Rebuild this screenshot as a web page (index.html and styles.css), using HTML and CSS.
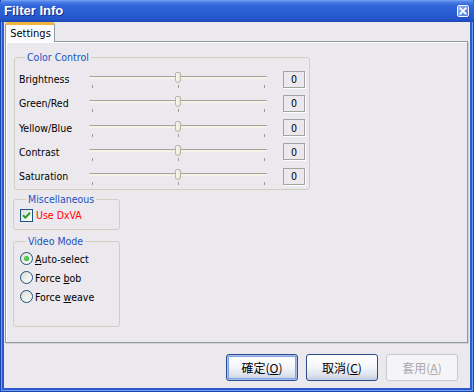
FILE: index.html
```html
<!DOCTYPE html>
<html>
<head>
<meta charset="utf-8">
<link rel="stylesheet" href="styles.css">
</head>
<body>
<div class="window">
  <div class="titlebar">
    <span class="title">Filter Info</span>
    <span class="close"><svg width="9" height="9" viewBox="0 0 9 9"><path d="M1.5 1.5 L7.5 7.5 M7.5 1.5 L1.5 7.5" stroke="#fff" stroke-width="2" stroke-linecap="square"/></svg></span>
  </div>
  <div class="client">
    <div class="tabs"><div class="tab">Settings</div></div>
    <div class="panel">
      <fieldset class="group color">
        <legend>Color Control</legend>
        <div class="row"><span class="lbl">Brightness</span><div class="slider"><div class="track"></div><div class="thumb"></div><i class="tick t1"></i><i class="tick t2"></i><i class="tick t3"></i></div><span class="val">0</span></div>
        <div class="row"><span class="lbl">Green/Red</span><div class="slider"><div class="track"></div><div class="thumb"></div><i class="tick t1"></i><i class="tick t2"></i><i class="tick t3"></i></div><span class="val">0</span></div>
        <div class="row"><span class="lbl">Yellow/Blue</span><div class="slider"><div class="track"></div><div class="thumb"></div><i class="tick t1"></i><i class="tick t2"></i><i class="tick t3"></i></div><span class="val">0</span></div>
        <div class="row"><span class="lbl">Contrast</span><div class="slider"><div class="track"></div><div class="thumb"></div><i class="tick t1"></i><i class="tick t2"></i><i class="tick t3"></i></div><span class="val">0</span></div>
        <div class="row"><span class="lbl">Saturation</span><div class="slider"><div class="track"></div><div class="thumb"></div><i class="tick t1"></i><i class="tick t2"></i><i class="tick t3"></i></div><span class="val">0</span></div>
      </fieldset>
      <fieldset class="group misc">
        <legend>Miscellaneous</legend>
        <div class="opt"><span class="check"><svg width="9" height="9" viewBox="0 0 9 9"><path d="M1 4.2 L3.4 6.6 L8 1.8" fill="none" stroke="#21a121" stroke-width="2"/></svg></span><span class="red">Use DxVA</span></div>
      </fieldset>
      <fieldset class="group mode">
        <legend>Video Mode</legend>
        <div class="opt radio-row"><span class="radio on"></span><span><u>A</u>uto-select</span></div>
        <div class="opt radio-row"><span class="radio"></span><span>Force <u>b</u>ob</span></div>
        <div class="opt radio-row"><span class="radio"></span><span>Force <u>w</u>eave</span></div>
      </fieldset>
    </div>
    <div class="buttons">
      <button class="btn default">確定(<u>O</u>)</button>
      <button class="btn">取消(<u>C</u>)</button>
      <button class="btn disabled">套用(<u>A</u>)</button>
    </div>
  </div>
</div>
</body>
</html>
```
FILE: styles.css
```css
html, body {
  margin: 0;
  padding: 0;
  background: #ffffff;
}
.window {
  width: 474px;
  height: 392px;
  box-sizing: border-box;
  display: flex;
  flex-direction: column;
  background: #2a5bd0;
  box-shadow: inset 1px 0 0 #1b46b0, inset -1px 0 0 #1b46b0, inset 0 -1px 0 #1b46b0, inset 2px 0 0 #6f9cf0, inset -2px 0 0 #6f9cf0, inset 0 -2px 0 #6f9cf0;
  padding: 0 4px 4px 4px;
  font-family: "DejaVu Sans Condensed", "DejaVu Sans", "Noto Sans CJK TC", sans-serif;
  font-stretch: condensed;
  font-size: 10.5px;
  color: #000;
}
.titlebar {
  height: 22px;
  margin: 0 -4px;
  padding: 0 5px 0 4px;
  display: flex;
  align-items: center;
  justify-content: space-between;
  background: linear-gradient(#7aa6f4 0, #4a7ee6 2px, #2f63d8 6px, #2a5cd2 14px, #2454c8 19px, #1d47b6 22px);
  border-radius: 4px 4px 0 0;
}
.title {
  color: #fff;
  font-family: "Liberation Sans", Arial, sans-serif;
  font-stretch: normal;
  font-weight: bold;
  font-size: 13px;
  text-shadow: 1px 1px 0 #0d2f8e;
  margin-top: -1px;
}
.close {
  width: 12px;
  height: 12px;
  box-sizing: border-box;
  border: 1px solid #f0f4ff;
  border-radius: 2px;
  background: linear-gradient(135deg, #8bb2f6, #4a7ae2);
  display: flex;
  align-items: center;
  justify-content: center;
  margin-top: -1px;
}
.close svg { width: 8px; height: 8px; }
.client {
  flex: 1;
  display: flex;
  flex-direction: column;
  background: #ebe9ed;
  padding: 0 2px 0 1px;
}
.tabs {
  display: flex;
  height: 19px;
  position: relative;
  z-index: 1;
}
.tab {
  width: 50px;
  height: 20px;
  box-sizing: border-box;
  border: 1px solid #919b9c;
  border-bottom: none;
  border-top: 3px solid #f3b63c;
  border-radius: 3px 3px 0 0;
  background: #fcfcfe;
  display: flex;
  align-items: center;
  justify-content: center;
  padding-bottom: 1px;
  padding-left: 1px;
  font-size: 11px;
}
.panel {
  flex: 1;
  border: 1px solid #919b9c;
  box-shadow: inset 1px 1px 0 #fff, 1px 1px 0 #d3d2d8;
  background: #ebe9ed;
  padding: 9px 8px 0 8px;
  display: flex;
  flex-direction: column;
  align-items: flex-start;
}
.group {
  margin: 0;
  border: 1px solid #d0d0bf;
  border-radius: 3px;
  padding: 0;
  min-width: 0;
}
.group legend {
  color: #2153c0;
  line-height: 12px;
  padding: 0 2px;
  margin-left: 6px;
}
.color {
  width: 296px;
  box-sizing: border-box;
  margin-left: 0;
  padding: 4px 3px 1px 4px;
}
.row {
  height: 24.25px;
  display: flex;
  align-items: center;
}
.lbl {
  width: 70px;
}
.slider {
  position: relative;
  width: 178px;
  height: 18px;
  margin-right: 16px;
}
.track {
  position: absolute;
  left: 0;
  right: 0;
  top: 6px;
  height: 3px;
  box-sizing: border-box;
  border-top: 1px solid #a3a39c;
  background: #f3f3e8;
  border-radius: 2px 0 0 2px;
}
.thumb {
  position: absolute;
  left: 86px;
  top: 2px;
  width: 6px;
  height: 11px;
  box-sizing: border-box;
  border: 1px solid #b5b5a8;
  border-radius: 2px 2px 3px 3px;
  background: linear-gradient(90deg, #f8f8f0, #e6e6d6);
}
.tick {
  position: absolute;
  top: 15px;
  width: 1px;
  height: 3px;
  background: #9c9c94;
}
.t1 { left: 3px; }
.t2 { left: 89px; }
.t3 { left: 175px; }
.val {
  width: 22px;
  height: 17px;
  box-sizing: border-box;
  border: 1px solid #a3a3a0;
  box-shadow: 1px 1px 0 #fff;
  display: flex;
  align-items: center;
  justify-content: center;
}
.misc {
  width: 107px;
  box-sizing: border-box;
  margin-top: 3px;
  margin-left: -1px;
  padding: 3px 4px 7px 6px;
}
.mode {
  width: 107px;
  box-sizing: border-box;
  margin-top: 5px;
  margin-left: -1px;
  padding: 2px 4px 20px 6px;
}
.opt {
  display: flex;
  align-items: center;
  height: 14px;
  gap: 3px;
}
.radio-row {
  height: 19px;
  gap: 2px;
}
.check {
  width: 13px;
  height: 13px;
  box-sizing: border-box;
  border: 1px solid #1c5180;
  background: linear-gradient(135deg, #dcdcd7, #fff);
  display: flex;
  align-items: center;
  justify-content: center;
}
.red { color: #f00; }
.radio {
  width: 13px;
  height: 13px;
  box-sizing: border-box;
  border: 1px solid #1c5180;
  border-radius: 50%;
  background: linear-gradient(135deg, #dcdcd5, #fff);
  display: flex;
  align-items: center;
  justify-content: center;
}
.radio.on::after {
  content: "";
  width: 5px;
  height: 5px;
  border-radius: 50%;
  background: radial-gradient(circle at 40% 40%, #5fe05f, #1a9e1a);
}
.buttons {
  display: flex;
  justify-content: flex-end;
  gap: 8px;
  padding: 11px 10px 7px 0;
}
.btn {
  width: 72px;
  height: 27px;
  box-sizing: border-box;
  border: 1px solid #2c4c8c;
  border-radius: 3px;
  background: linear-gradient(#ffffff 0, #f6f7fb 45%, #e2e6f0 75%, #c5cde2 100%);
  font-family: "Noto Sans CJK TC", "Liberation Sans", sans-serif;
  font-size: 12px;
  color: #000;
  padding: 0;
  display: flex;
  align-items: center;
  justify-content: center;
}
.btn.default {
  box-shadow: inset 0 0 0 1px #aac0ec, inset 0 0 0 2px #7fa2e8;
}
.btn.disabled {
  border-color: #c9c8cc;
  background: #f5f4f6;
  color: #aca8ac;
}
```
